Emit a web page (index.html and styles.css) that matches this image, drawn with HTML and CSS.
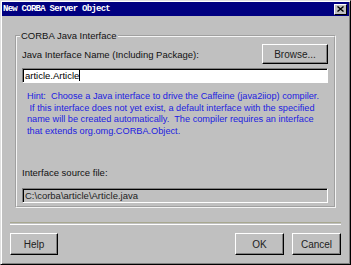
FILE: index.html
```html
<!DOCTYPE html>
<html lang="en">

<head>
    <meta charset="UTF-8">
    <title>New CORBA Server Object</title>
    <link rel="stylesheet" href="styles.css">
</head>

<body>
    <div class="window">
        <!-- Barra de titulo -->
        <div class="titlebar">
            <span class="title">New CORBA Server Object</span>
            <span class="close-btn">
                <svg width="7" height="6" viewBox="0 0 7 6">
                    <path d="M0.5 0.5 L6.5 5.5 M6.5 0.5 L0.5 5.5" stroke="#000" stroke-width="1.4" fill="none" />
                </svg>
            </span>
        </div>

        <div class="content">
            <fieldset class="group">
                <legend>CORBA Java Interface</legend>

                <div class="name-row">
                    <span>Java Interface Name (Including Package):</span>
                    <button class="btn browse">Browse...</button>
                </div>
                <div class="field">article.Article<span class="caret"></span></div>

                <div class="hint">Hint:  Choose a Java interface to drive the Caffeine (java2iiop) compiler.
 If this interface does not yet exist, a default interface with the specified
name will be created automatically.  The compiler requires an interface
that extends org.omg.CORBA.Object.</div>

                <div class="source-label">Interface source file:</div>
                <div class="field disabled">C:\corba\article\Article.java</div>
            </fieldset>

            <div class="separator"></div>

            <div class="button-row">
                <button class="btn">Help</button>
                <div class="right-buttons">
                    <button class="btn">OK</button>
                    <button class="btn">Cancel</button>
                </div>
            </div>
        </div>
    </div>
</body>

</html>
```

FILE: styles.css
```css
:root {
    --face: #c0c0c0;
    --shadow: #808080;
    --light: #ffffff;
    --dark: #000000;
    --title-bg: #000080;
    --hint: #2020e0;
}

body {
    margin: 0;
    background: var(--face);
    font-family: 'Liberation Sans', Arial, sans-serif;
    font-size: 9.5px;
    color: #111;
}

.window {
    width: 351px;
    height: 265px;
    box-sizing: border-box;
    padding: 1px;
    border: 1px solid;
    border-color: #dfdfdf var(--dark) var(--dark) #dfdfdf;
    box-shadow: inset 1px 1px var(--light), inset -1px -1px var(--shadow);
    display: flex;
    flex-direction: column;
}

.titlebar {
    height: 14px;
    background: var(--title-bg);
    display: flex;
    align-items: center;
    justify-content: space-between;
    padding: 0 2px 0 1px;
}

.title {
    color: #fff;
    font-family: 'Liberation Mono', monospace;
    font-size: 9px;
    font-weight: bold;
    letter-spacing: -0.75px;
}

.close-btn {
    width: 13px;
    height: 11px;
    box-sizing: border-box;
    background: var(--face);
    border: 1px solid;
    border-color: var(--light) var(--dark) var(--dark) var(--light);
    display: flex;
    align-items: center;
    justify-content: center;
}

.content {
    flex: 1;
    padding: 14px 8px 0 8px;
    display: flex;
    flex-direction: column;
}

.group {
    margin: 0 5px;
    padding: 2px 6px 3px 5px;
    border: 2px groove #f4f4f4;
    min-width: 0;
}

.group legend {
    padding: 0 1px;
    margin-left: -2px;
    line-height: 12px;
}

.name-row {
    height: 20px;
    display: flex;
    align-items: center;
    justify-content: space-between;
}

.field {
    margin-top: 4px;
    height: 15px;
    box-sizing: border-box;
    background: #fff;
    border: 1px solid;
    border-color: var(--shadow) var(--light) var(--light) var(--shadow);
    box-shadow: inset 1px 1px var(--dark);
    padding: 0 0 0 2px;
    line-height: 13px;
    color: #000;
    display: flex;
    align-items: center;
}

.caret {
    width: 1px;
    height: 11px;
    background: #000;
}

.field.disabled {
    background: var(--face);
    margin-top: 9px;
    color: #222;
}

.hint {
    margin-top: 8px;
    padding-left: 5px;
    font-size: 9.2px;
    color: var(--hint);
    line-height: 11.5px;
    white-space: pre;
}

.source-label {
    margin-top: 30px;
    line-height: 12px;
}

.btn {
    font-family: 'Liberation Sans', Arial, sans-serif;
    font-size: 10px;
    color: #222;
    background: var(--face);
    border: 1px solid;
    border-color: var(--light) var(--dark) var(--dark) var(--light);
    box-shadow: inset -1px -1px var(--shadow);
    padding: 0;
    height: 22px;
    width: 49px;
}

.browse {
    width: 66px;
    height: 20px;
}

.separator {
    margin-top: 14px;
    height: 1px;
    border-top: 1px solid #a8a890;
    border-bottom: 1px solid var(--light);
}

.button-row {
    margin-top: 8px;
    display: flex;
    justify-content: space-between;
}

.button-row > .btn {
    width: 48px;
}

.right-buttons {
    display: flex;
    gap: 8px;
}
```
